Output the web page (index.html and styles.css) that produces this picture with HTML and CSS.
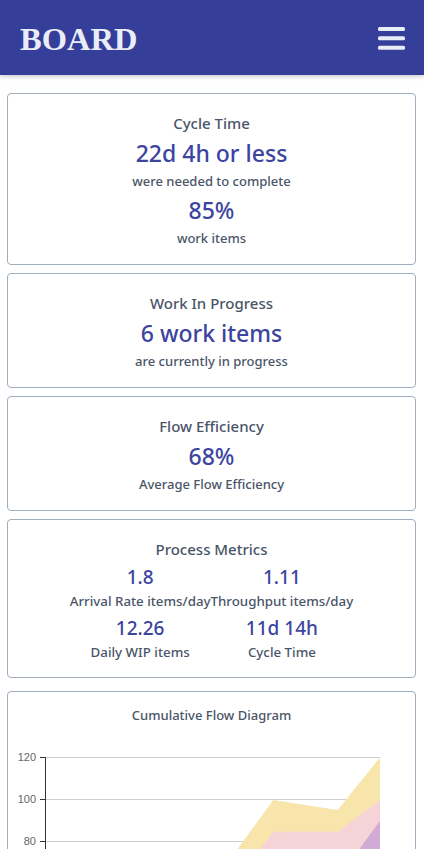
FILE: index.html
```html
<!DOCTYPE html>
<html lang="en">
<head>
<meta charset="utf-8">
<meta name="viewport" content="width=device-width, initial-scale=1">
<title>Board</title>
<link rel="stylesheet" href="styles.css">
</head>
<body>
<header class="topbar">
  <div class="brand">BOARD</div>
  <button class="menu-btn" aria-label="Menu">
    <svg width="27" height="23" viewBox="0 0 27 23" aria-hidden="true">
      <rect x="0" y="0" width="27" height="4" rx="1.5"/>
      <rect x="0" y="9.2" width="27" height="4" rx="1.5"/>
      <rect x="0" y="18.7" width="27" height="4" rx="1.5"/>
    </svg>
  </button>
</header>

<main class="content">
  <section class="card">
    <div class="card-title">Cycle Time</div>
    <div class="metric">22d 4h or less</div>
    <div class="caption">were needed to complete</div>
    <div class="metric">85%</div>
    <div class="caption">work items</div>
  </section>

  <section class="card">
    <div class="card-title">Work In Progress</div>
    <div class="metric">6 work items</div>
    <div class="caption">are currently in progress</div>
  </section>

  <section class="card">
    <div class="card-title">Flow Efficiency</div>
    <div class="metric">68%</div>
    <div class="caption">Average Flow Efficiency</div>
  </section>

  <section class="card card-process">
    <div class="card-title">Process Metrics</div>
    <div class="metric-grid">
      <div class="pm-cell"><div class="pm-value">1.8</div><div class="pm-label">Arrival Rate items/day</div></div>
      <div class="pm-cell"><div class="pm-value">1.11</div><div class="pm-label">Throughput items/day</div></div>
      <div class="pm-cell"><div class="pm-value">12.26</div><div class="pm-label">Daily WIP items</div></div>
      <div class="pm-cell"><div class="pm-value">11d 14h</div><div class="pm-label">Cycle Time</div></div>
    </div>
  </section>

  <section class="card card-chart">
    <div class="chart-title">Cumulative Flow Diagram</div>
    <svg class="chart" width="407" height="320" viewBox="0 0 407 320" aria-label="Cumulative Flow Diagram">
      <g class="grid">
        <line x1="37" y1="32.5" x2="372" y2="32.5"/>
        <line x1="37" y1="74.5" x2="372" y2="74.5"/>
        <line x1="37" y1="116.5" x2="372" y2="116.5"/>
        <line x1="37" y1="158.5" x2="372" y2="158.5"/>
        <line x1="37" y1="201.5" x2="372" y2="201.5"/>
        <line x1="37" y1="243.5" x2="372" y2="243.5"/>
      </g>
      <polygon class="area-yellow" points="111,286 265.3,75 329.7,85 372,32.3 372,286"/>
      <polygon class="area-pink" points="130,286 265.3,106.7 329.7,106.7 372,75 372,286"/>
      <polygon class="area-purple" points="233,286 372,95.7 372,286"/>
      <g class="axis">
        <line x1="37.5" y1="32" x2="37.5" y2="286"/>
        <line x1="32" y1="32.5" x2="37" y2="32.5"/>
        <line x1="32" y1="74.5" x2="37" y2="74.5"/>
        <line x1="32" y1="116.5" x2="37" y2="116.5"/>
        <line x1="32" y1="158.5" x2="37" y2="158.5"/>
        <line x1="32" y1="201.5" x2="37" y2="201.5"/>
        <line x1="32" y1="243.5" x2="37" y2="243.5"/>
        <line x1="37" y1="286" x2="372" y2="286"/>
      </g>
      <g class="tick-labels">
        <text x="28" y="36">120</text>
        <text x="28" y="78">100</text>
        <text x="28" y="120">80</text>
        <text x="28" y="162">60</text>
        <text x="28" y="205">40</text>
        <text x="28" y="247">20</text>
        <text x="28" y="290">0</text>
      </g>
    </svg>
  </section>
</main>
</body>
</html>
```
FILE: styles.css
```css
* { box-sizing: border-box; }

html, body {
  margin: 0;
  padding: 0;
  background: #ffffff;
}

body {
  font-family: "Noto Sans", "Open Sans", "Liberation Sans", sans-serif;
  color: #4a5568;
}

.topbar {
  height: 75px;
  background: #353e98;
  display: flex;
  align-items: center;
  justify-content: space-between;
  padding: 0 19px 0 20px;
  box-shadow: 0 2px 4px rgba(0, 0, 0, 0.18);
  position: relative;
  z-index: 1;
}

.brand {
  font-family: "Liberation Serif", "Times New Roman", serif;
  font-weight: 700;
  font-size: 32.5px;
  line-height: 32px;
  color: #e9edf7;
  margin-top: 3px;
}

.menu-btn {
  background: none;
  border: 0;
  padding: 0;
  margin-top: 2px;
  display: flex;
  fill: #e9edf7;
}

.content {
  padding: 18px 8px 20px 7px;
  display: flex;
  flex-direction: column;
  gap: 8px;
}

.card {
  border: 1px solid #a0aec0;
  border-radius: 4px;
  padding: 18px 8px 16px;
  text-align: center;
  background: #fff;
}

.card-title {
  font-size: 15px;
  line-height: 22px;
  font-weight: 500;
  color: #4a5568;
}

.metric {
  font-size: 23px;
  line-height: 38px;
  font-weight: 500;
  color: #3c44a0;
}

.caption {
  font-size: 13px;
  line-height: 19px;
  font-weight: 500;
  color: #4a5568;
}

.card-process {
  padding-bottom: 14px;
}

.metric-grid {
  margin-top: 3px;
  display: grid;
  grid-template-columns: auto auto;
  justify-content: center;
  row-gap: 2px;
}

.pm-value {
  font-size: 19px;
  line-height: 28px;
  font-weight: 500;
  color: #3c44a0;
}

.pm-label {
  font-size: 13.3px;
  line-height: 21px;
  font-weight: 500;
  color: #4a5568;
  white-space: nowrap;
}

.card-chart {
  padding: 13px 0 0;
  margin-top: 5px;
}

.chart-title {
  font-size: 13px;
  line-height: 20px;
  font-weight: 500;
  color: #4a5568;
}

.chart {
  display: block;
}

.grid line {
  stroke: #cfcfcf;
  stroke-width: 1;
}

.axis line {
  stroke: #333333;
  stroke-width: 1;
}

.area-yellow { fill: #f8e5ab; }
.area-pink { fill: #f5d3d7; }
.area-purple { fill: #d1aad5; }

.tick-labels text {
  font-family: "Liberation Sans", Arial, sans-serif;
  font-size: 11px;
  fill: #666666;
  text-anchor: end;
}
```
